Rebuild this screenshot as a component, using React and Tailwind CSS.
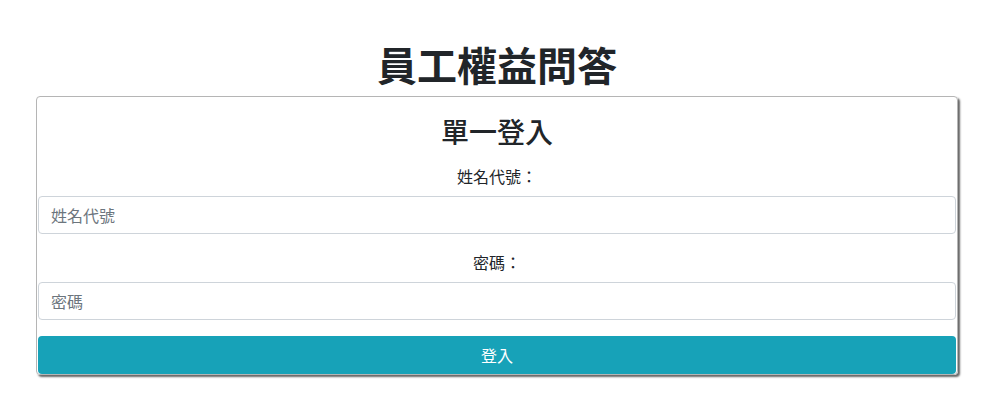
export default function App() {
  const font = { fontFamily: '"Noto Sans CJK TC", "Noto Sans", sans-serif' };
  return (
    <div className="w-[1002px] h-[401px] bg-white text-[#212529]" style={font}>
      <div className="ml-[36px] w-[922px] pt-[40px]">
        <h1 className="text-[40px] leading-[48px] font-semibold text-center h-[48px] mb-[8px]">員工權益問答</h1>
        <div className="border border-[#b5b5b5] rounded-[4px] shadow-[2px_2px_2px_rgba(0,0,0,0.6)] px-[1px] pt-[17px] flex flex-col">
          <h3 className="text-[28px] leading-[34px] font-medium text-center h-[34px]">單一登入</h3>
          <label className="mt-[16px] text-[16px] leading-[24px] text-center">姓名代號：</label>
          <input
            className="mt-[8px] h-[38px] w-full border border-[#ced4da] rounded-[4px] px-[12px] text-[16px] placeholder:text-[#6c757d] outline-none"
            placeholder="姓名代號"
            style={font}
          />
          <label className="mt-[16px] text-[16px] leading-[24px] text-center">密碼：</label>
          <input
            type="password"
            className="mt-[8px] h-[38px] w-full border border-[#ced4da] rounded-[4px] px-[12px] text-[16px] placeholder:text-[#6c757d] outline-none"
            placeholder="密碼"
            style={font}
          />
          <button
            className="mt-[16px] h-[38px] w-full bg-[#17a2b8] text-white text-[16px] rounded-[4px]"
            style={font}
          >
            登入
          </button>
        </div>
      </div>
    </div>
  );
}
